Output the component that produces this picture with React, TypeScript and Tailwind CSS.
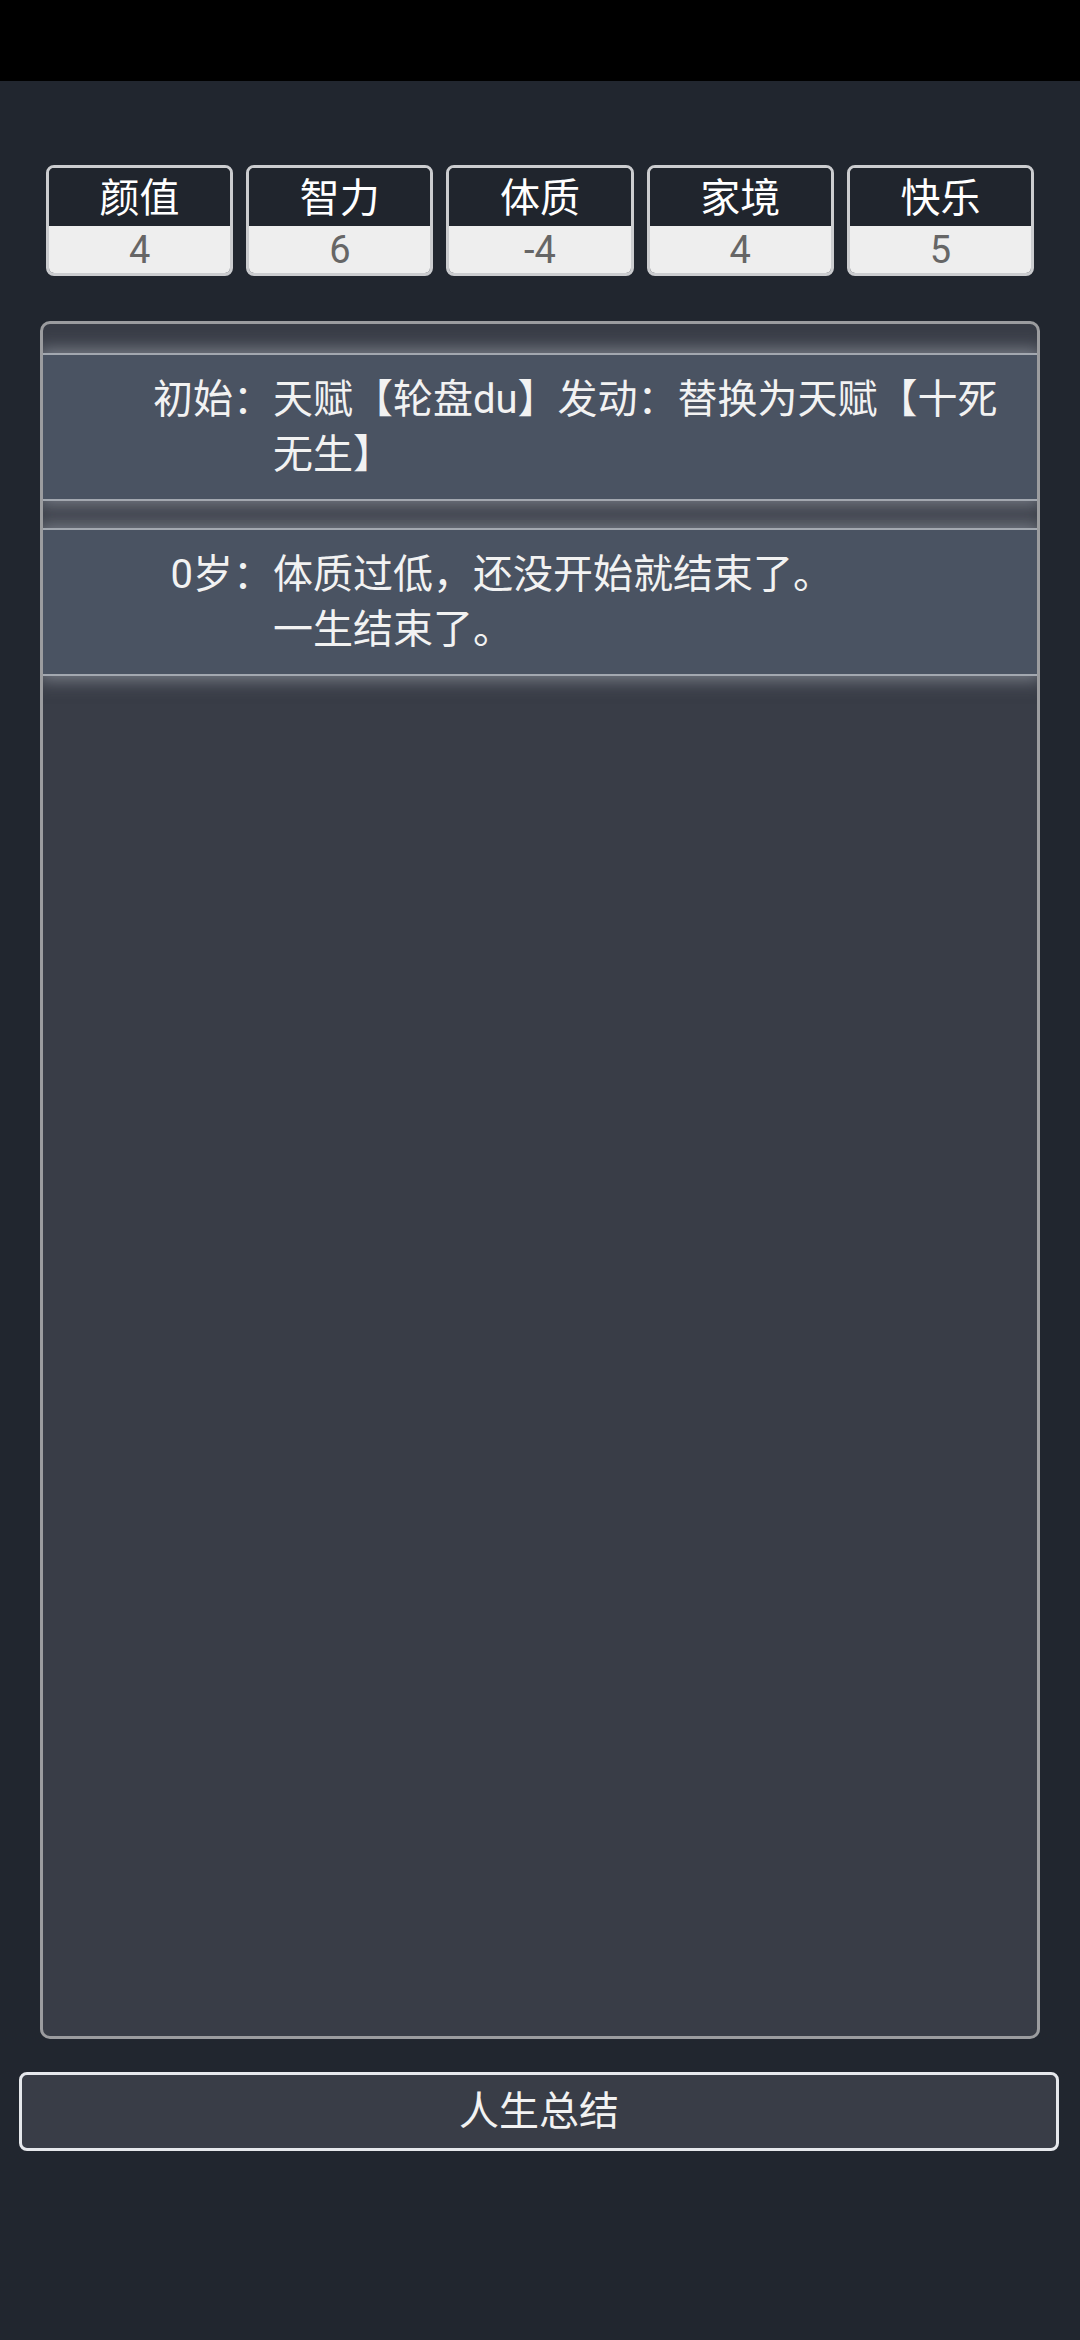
import { FC } from "react"

const stats = [
  { label: "颜值", value: "4" },
  { label: "智力", value: "6" },
  { label: "体质", value: "-4" },
  { label: "家境", value: "4" },
  { label: "快乐", value: "5" },
]

const trajectory = [
  { age: "初始：", text: "天赋【轮盘du】发动：替换为天赋【十死无生】" },
  { age: "0岁：", text: "体质过低，还没开始就结束了。\n一生结束了。" },
]

const StatBox: FC<{ label: string; value: string }> = ({ label, value }) => (
  <div className="flex-1 h-[111px] flex flex-col border-[3px] border-[#cbcccf] rounded-[8px] overflow-hidden">
    <div className="h-[58px] pt-[4px] flex items-center justify-center bg-[#20252d] text-white text-[40px] leading-[50px]">
      {label}
    </div>
    <div className="flex-1 flex items-center justify-center bg-[#eeeeee] text-[#666666] text-[38px] leading-[46px]">
      {value}
    </div>
  </div>
)

export default function App() {
  return (
    <div
      className="w-[1080px] h-[2340px] bg-[#21262f] flex flex-col"
      style={{ fontFamily: 'Roboto, "Noto Sans CJK SC", sans-serif' }}
    >
      {/* status bar */}
      <div className="h-[81px] bg-black" />

      {/* property summary */}
      <div className="mt-[84px] px-[46px] flex gap-[13px]">
        {stats.map((s) => (
          <StatBox key={s.label} label={s.label} value={s.value} />
        ))}
      </div>

      {/* life trajectory */}
      <div className="mt-[45px] ml-[40px] mr-[40px] h-[1718px] border-[3px] border-[#9b9c9f] rounded-[10px] bg-[#393d47] overflow-hidden pt-[29px] flex flex-col gap-[27px]">
        {trajectory.map((item) => (
          <div
            key={item.age}
            className="flex bg-[#4a5362] border-y-2 border-[#a3a8b0] py-[17px] shadow-[0_0_16px_4px_rgba(165,170,180,0.6)] text-[#f2f2f2] text-[40px] leading-[55px]"
          >
            <div className="w-[230px] shrink-0 text-right">{item.age}</div>
            <div className="flex-1 mr-[27px] whitespace-pre-line">{item.text}</div>
          </div>
        ))}
      </div>

      {/* summary button */}
      <button className="mt-[33px] ml-[19px] mr-[21px] h-[79px] border-[3px] border-[#e6e8ec] rounded-[8px] bg-[#393d47] text-[#f2f2f2] text-[40px] flex items-center justify-center">
        人生总结
      </button>
    </div>
  )
}
